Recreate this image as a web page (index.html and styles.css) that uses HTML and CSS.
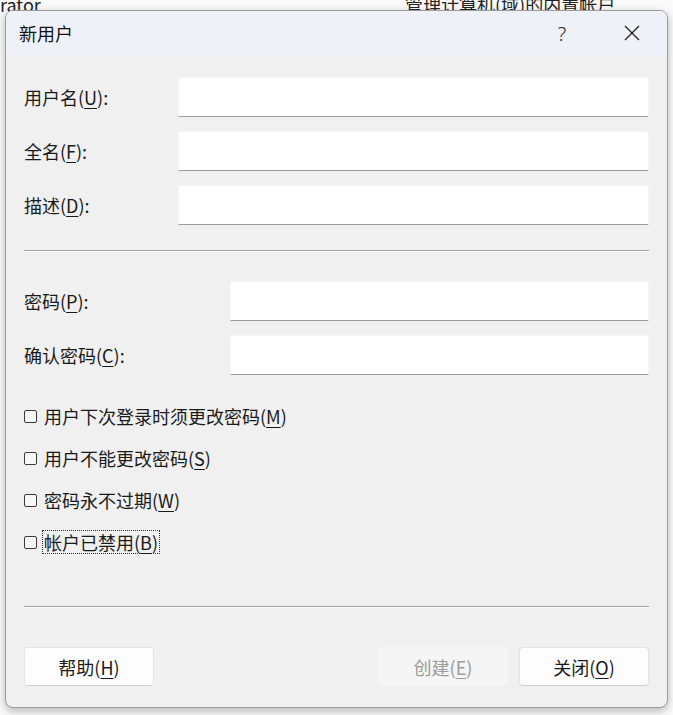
FILE: index.html
```html
<!DOCTYPE html>
<html>

<head>
    <title>新用户</title>
    <link rel="stylesheet" href="styles.css">
</head>

<body>

    <div class="backdrop">
        <div class="back-row">
            <span class="back-name">rator</span>
            <span class="back-desc">管理计算机(域)的内置帐户</span>
        </div>
    </div>

    <div class="dialog">
        <div class="title-bar">
            <span class="title">新用户</span>
            <span class="title-help">?</span>
            <span class="title-close">
                <svg width="16" height="16" viewBox="0 0 16 16">
                    <path d="M1 1 L15 15 M15 1 L1 15" stroke="#1a1a1a" stroke-width="1.2" fill="none"/>
                </svg>
            </span>
        </div>

        <div class="content">
            <div class="field">
                <label class="name-label">用户名(<u>U</u>):</label>
                <input class="text-box" type="text">
            </div>
            <div class="field">
                <label class="name-label">全名(<u>F</u>):</label>
                <input class="text-box" type="text">
            </div>
            <div class="field">
                <label class="name-label">描述(<u>D</u>):</label>
                <input class="text-box" type="text">
            </div>

            <div class="separator top-sep"></div>

            <div class="field">
                <label class="pass-label">密码(<u>P</u>):</label>
                <input class="text-box" type="password">
            </div>
            <div class="field">
                <label class="pass-label">确认密码(<u>C</u>):</label>
                <input class="text-box" type="password">
            </div>

            <div class="checks">
                <label class="check"><span class="box"></span><span class="check-text">用户下次登录时须更改密码(<u>M</u>)</span></label>
                <label class="check"><span class="box"></span><span class="check-text">用户不能更改密码(<u>S</u>)</span></label>
                <label class="check"><span class="box"></span><span class="check-text">密码永不过期(<u>W</u>)</span></label>
                <label class="check"><span class="box"></span><span class="check-text focused">帐户已禁用(<u>B</u>)</span></label>
            </div>

            <div class="separator bottom-sep"></div>

            <div class="buttons">
                <button class="btn">帮助(<u>H</u>)</button>
                <div class="spacer"></div>
                <button class="btn" disabled>创建(<u>E</u>)</button>
                <button class="btn">关闭(<u>O</u>)</button>
            </div>
        </div>
    </div>

</body>
</html>
```

FILE: styles.css
```css
body {
    margin: 0;
    width: 673px;
    height: 715px;
    overflow: hidden;
    background: #fbfbfb;
    font-family: "Noto Sans CJK SC", "Noto Sans", sans-serif;
    color: #1a1a1a;
    position: relative;
}
.backdrop {
    font-size: 18px;
    color: #222;
}
.back-row {
    display: flex;
    margin-top: -8px;
    line-height: 24px;
}
.back-name {
    width: 405px;
}
.dialog {
    position: absolute;
    left: 5px;
    top: 10px;
    width: 663px;
    box-sizing: border-box;
    border: 1px solid #9c9c9c;
    border-radius: 8px;
    background: #f0f0f0;
    box-shadow: 0 3px 10px rgba(0, 0, 0, 0.28);
    overflow: hidden;
}
.title-bar {
    display: flex;
    align-items: center;
    height: 44px;
    background: #eef2f8;
    padding-left: 13px;
}
.title {
    font-size: 18px;
    flex: 1;
    color: #111;
}
.title-help {
    width: 70px;
    text-align: center;
    font-size: 20px;
    font-weight: 300;
    color: #222;
    font-family: "Noto Sans", sans-serif;
}
.title-close {
    width: 70px;
    display: flex;
    justify-content: center;
}
.content {
    display: flex;
    flex-direction: column;
    padding: 22px 18px 21px 18px;
    font-size: 18px;
}
u {
    text-underline-offset: 3px;
    text-decoration-thickness: 1px;
}
.field {
    display: flex;
    align-items: center;
    height: 40px;
    margin-bottom: 14px;
}
.name-label {
    width: 154px;
    flex-shrink: 0;
}
.pass-label {
    width: 206px;
    flex-shrink: 0;
}
.text-box {
    flex: 1;
    height: 40px;
    box-sizing: border-box;
    border: 1px solid #f6f6f6;
    border-bottom: 1px solid #9d9d9d;
    border-radius: 3px 3px 0 0;
    background: #ffffff;
    font-size: 17px;
    outline: none;
}
.separator {
    height: 1px;
    background: #a3a3a3;
    border-bottom: 1px solid #fafafa;
}
.top-sep {
    margin-top: 11px;
    margin-bottom: 29px;
}
.checks {
    display: flex;
    flex-direction: column;
    gap: 18px;
    margin-top: 15px;
}
.check {
    display: flex;
    align-items: center;
    height: 24px;
}
.box {
    width: 11px;
    height: 11px;
    border: 1px solid #3a3a3a;
    border-radius: 2px;
    background: #f7f7f7;
    margin-right: 5px;
}
.check-text {
    padding: 0 1px;
    line-height: 22px;
    border: 1px solid transparent;
}
.check-text.focused {
    border: 1px dotted #333;
}
.bottom-sep {
    margin-top: 52px;
    margin-bottom: 39px;
}
.buttons {
    display: flex;
    gap: 11px;
}
.spacer {
    flex: 1;
}
.btn {
    width: 130px;
    height: 39px;
    font-family: "Noto Sans CJK SC", "Noto Sans", sans-serif;
    font-size: 18px;
    color: #1a1a1a;
    background: #fdfdfd;
    border: 1px solid #e3e3e3;
    border-bottom-color: #d0d0d0;
    border-radius: 4px;
}
.btn[disabled] {
    background: #f5f5f5;
    border-color: #f5f5f5;
    color: #9b9b9b;
}
```
